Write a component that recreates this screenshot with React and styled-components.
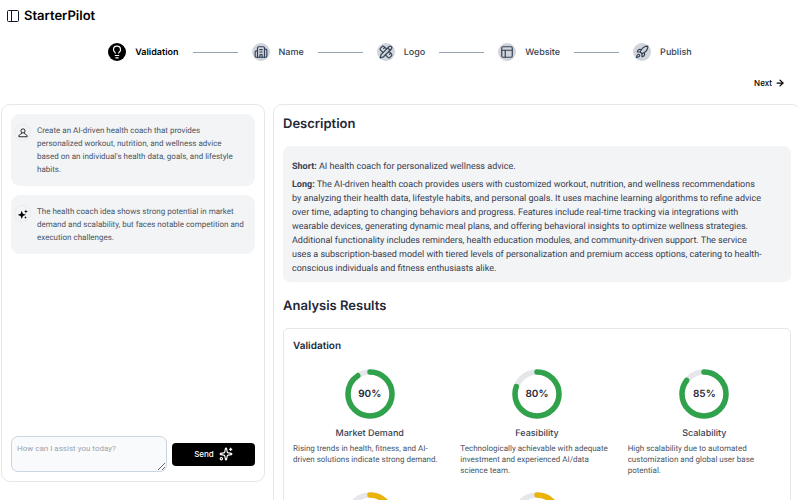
import React from 'react'
import styled, { createGlobalStyle } from 'styled-components'
import { ArrowRight, Building2, Lightbulb, PanelsTopLeft, PencilRuler, Rocket, Sparkles } from 'lucide-react'

const steps = [
    { label: 'Validation', icon: Lightbulb, active: true },
    { label: 'Name', icon: Building2 },
    { label: 'Logo', icon: PencilRuler },
    { label: 'Website', icon: PanelsTopLeft },
    { label: 'Publish', icon: Rocket },
]

const scores = [
    { title: 'Market Demand', value: 90, text: 'Rising trends in health, fitness, and AI-driven solutions indicate strong demand.' },
    { title: 'Feasibility', value: 80, text: 'Technologically achievable with adequate investment and experienced AI/data science team.' },
    { title: 'Scalability', value: 85, text: 'High scalability due to automated customization and global user base potential.' },
]

// second row of the grid, only the rings so far
const pending = [70, 75]

const UserIcon = () => (
    <svg width="10" height="10" viewBox="0 0 24 24" fill="none" stroke="currentColor" strokeWidth="2">
        <circle cx="12" cy="7" r="5" />
        <path d="M9 11.5c0 2-1 3-3 3.500C3.500 15.700 2 17 2 21h20c0-4-1.500-5.300-4-6-2-.5-3-1.500-3-3.500" />
    </svg>
)

const StarsIcon = () => (
    <svg width="10" height="10" viewBox="0 0 24 24" fill="currentColor">
        <path d="M9 4l2.800 7.200L19 14l-7.200 2.800L9 24l-2.800-7.200L-1 14l7.200-2.800z" />
        <path d="M19 1l1.300 3.700L24 6l-3.700 1.300L19 11l-1.300-3.700L14 6l3.700-1.300z" />
        <path d="M18 17l1 2.500 2.500 1-2.500 1-1 2.500-1-2.500-2.500-1 2.500-1z" />
    </svg>
)

const Ring = ({ value, children }) => {
    const length = 2 * Math.PI * 22
    return (
        <RingWrap>
            <svg width="50" height="50" viewBox="0 0 50 50" fill="none" strokeWidth="5.5">
                <circle cx="25" cy="25" r="22" stroke="#e5e7eb" />
                <circle
                    cx="25"
                    cy="25"
                    r="22"
                    stroke={value >= 80 ? '#31a24c' : '#eab308'}
                    strokeLinecap="round"
                    strokeDasharray={length}
                    strokeDashoffset={length * (1 - value / 100)}
                    transform="rotate(-90 25 25)"
                />
            </svg>
            {children}
        </RingWrap>
    )
}

const App = () => (
    <Page>
        <GlobalStyle />
        <Header>
            <MenuButton type="button" aria-label="Toggle sidebar">
                <svg width="12" height="12" viewBox="0 0 12 12" fill="none" stroke="currentColor">
                    <rect x="0.5" y="0.5" width="11" height="11" rx="1" />
                    <path d="M4.500 0.500v11" />
                </svg>
            </MenuButton>
            <Brand>StarterPilot</Brand>
        </Header>

        <Steps>
            {steps.map(({ label, icon: Icon, active }, i) => (
                <React.Fragment key={label}>
                    {i > 0 && <StepLine />}
                    <Step>
                        <StepIcon $active={active}><Icon size={14} strokeWidth={2} /></StepIcon>
                        <StepLabel $active={active}>{label}</StepLabel>
                    </Step>
                </React.Fragment>
            ))}
        </Steps>

        <Toolbar>
            <NextButton type="button">Next <ArrowRight size={10} strokeWidth={3} /></NextButton>
        </Toolbar>

        <Columns>
            <Chat>
                <Messages>
                    <Message>
                        <Avatar><UserIcon /></Avatar>
                        <MessageText>Create an AI-driven health coach that provides personalized workout, nutrition, and wellness advice based&nbsp;on an individual's health data, goals, and lifestyle habits.</MessageText>
                    </Message>
                    <Message>
                        <Avatar><StarsIcon /></Avatar>
                        <MessageText>The health coach idea shows strong potential in market demand and scalability, but faces notable competition and execution challenges.</MessageText>
                    </Message>
                </Messages>
                <ChatForm onSubmit={(e) => e.preventDefault()}>
                    <ChatInput aria-label="Message" placeholder="How can I assist you today?" />
                    <SendButton type="submit">Send <Sparkles size={14} strokeWidth={2} /></SendButton>
                </ChatForm>
            </Chat>

            <Panel>
                <Title>Description</Title>
                <Summary>
                    <p><strong>Short:</strong> AI health coach for personalized wellness advice.</p>
                    <p><strong>Long:</strong> The AI-driven health coach provides users with customized workout, nutrition, and wellness recommendations by analyzing their health data, lifestyle habits, and personal goals. It uses machine learning algorithms to refine advice over time, adapting to changing behaviors and progress. Features include real-time tracking via integrations with wearable devices, generating dynamic meal plans, and offering behavioral insights to optimize wellness strategies. Additional functionality includes reminders, health education modules, and community-driven support. The service uses a subscription-based model with tiered levels of personalization and premium access options, catering to health-conscious individuals and fitness enthusiasts alike.</p>
                </Summary>
                <Title>Analysis Results</Title>
                <Card>
                    <CardTitle>Validation</CardTitle>
                    <Scores>
                        {scores.map((score) => (
                            <Score key={score.title}>
                                <Ring value={score.value}>
                                    <RingValue>{score.value}%</RingValue>
                                </Ring>
                                <ScoreTitle>{score.title}</ScoreTitle>
                                <ScoreText>{score.text}</ScoreText>
                            </Score>
                        ))}
                        {pending.map((value) => (
                            <Score key={value}>
                                <Ring value={value} />
                            </Score>
                        ))}
                    </Scores>
                </Card>
            </Panel>
        </Columns>
    </Page>
)

export default App

const GlobalStyle = createGlobalStyle`
    * {
        box-sizing: border-box;
    }
    body {
        margin: 0;
        background: white;
        color: #1f2937;
        font-family: Inter, sans-serif;
        text-rendering: geometricPrecision;
    }
    h1, h2, h3, h4, p, ol {
        margin: 0;
        padding: 0;
    }
    button, textarea {
        font-family: inherit;
    }
    svg {
        display: block;
        flex-shrink: 0;
    }
`
const Page = styled.div`
    height: 100vh;
    overflow: hidden;
`
const Header = styled.header`
    display: flex;
    align-items: center;
    gap: 5px;
    height: 32px;
    padding: 0 7px;
`
const MenuButton = styled.button`
    padding: 0;
    border: none;
    background: none;
    color: #0f172a;
`
const Brand = styled.h1`
    font-size: 13px;
    font-weight: 600;
    line-height: 20px;
    color: black;
`
const Steps = styled.ol`
    display: flex;
    align-items: center;
    justify-content: center;
    gap: 14px;
    height: 40px;
    padding-left: 2px;
    list-style: none;
`
const Step = styled.li`
    display: flex;
    align-items: center;
    gap: 9px;
`
const StepIcon = styled.span`
    display: flex;
    align-items: center;
    justify-content: center;
    width: 18px;
    height: 18px;
    border-radius: 50%;
    background: ${props => props.$active ? 'black' : '#d1d5db'};
    color: ${props => props.$active ? 'white' : '#334155'};
`
const StepLabel = styled.span`
    font-size: 9px;
    font-weight: ${props => props.$active ? 600 : 500};
    color: ${props => props.$active ? 'black' : '#334155'};
`
const StepLine = styled.li`
    width: 45px;
    height: 1px;
    background: #94a3b8;
`
const Toolbar = styled.div`
    display: flex;
    justify-content: flex-end;
    align-items: center;
    height: 22px;
    padding: 0 13px;
`
const NextButton = styled.button`
    display: flex;
    align-items: center;
    gap: 3px;
    padding: 0;
    border: none;
    background: none;
    color: black;
    font-size: 8px;
    font-weight: 500;
`
const Columns = styled.main`
    display: grid;
    grid-template-columns: minmax(0, 1fr) minmax(0, 2fr);
    align-items: start;
    gap: 8px;
    margin: 10px -3px 0 1px;
`
const Panel = styled.section`
    border: 1px solid #e5e7eb;
    border-radius: 9px;
    padding: 9px;
`
const Chat = styled(Panel)`
    display: flex;
    flex-direction: column;
    height: calc(100vh - 122px);
`
const Messages = styled.div`
    flex: 1;
    display: flex;
    flex-direction: column;
    gap: 9px;
`
const Message = styled.div`
    display: flex;
    align-items: flex-start;
    gap: 6px;
    padding: 10px 9px 10px 3px;
    border-radius: 9px;
    background: #f3f4f6;
`
const Avatar = styled.span`
    display: flex;
    align-items: center;
    justify-content: center;
    flex-shrink: 0;
    width: 17px;
    height: 17px;
    border: 1px solid #e9ebee;
    border-radius: 50%;
    color: black;
`
const MessageText = styled.p`
    font-family: Roboto, sans-serif;
    font-size: 8px;
    line-height: 13px;
    color: #4b5563;
`
const ChatForm = styled.form`
    display: flex;
    align-items: center;
    gap: 5px;
`
const ChatInput = styled.textarea`
    flex: 1;
    min-width: 0;
    height: 36px;
    padding: 5px;
    border: 1px solid #cbd5e1;
    border-radius: 7px;
    background: #f9fafb;
    font-family: Roboto, sans-serif;
    font-size: 8px;
    line-height: 13px;
    color: #1f2937;

    &::placeholder {
        color: #9ca3af;
    }
`
const SendButton = styled.button`
    display: flex;
    align-items: center;
    justify-content: center;
    gap: 5px;
    width: 83px;
    height: 23px;
    border: none;
    border-radius: 4px;
    background: black;
    color: white;
    font-size: 8px;
    font-weight: 500;
`
const Title = styled.h2`
    font-size: 13px;
    font-weight: 600;
    line-height: 20px;
    color: #1f2937;
`
const Summary = styled.div`
    margin: 12px 0 14px;
    padding: 14px 25px 6px 9px;
    border-radius: 7px;
    background: #f3f4f6;
    font-family: Roboto, sans-serif;
    font-size: 9px;
    line-height: 14px;
    color: #374151;

    p + p {
        margin-top: 4px;
    }
`
const Card = styled.div`
    margin-top: 12px;
    padding: 10px 9px;
    border: 1px solid #e5e7eb;
    border-radius: 5px;
`
const CardTitle = styled.h3`
    font-size: 10px;
    font-weight: 600;
    line-height: 14px;
`
const Scores = styled.div`
    display: grid;
    grid-template-columns: repeat(3, 1fr);
    gap: 16px 14px;
    margin-top: 16px;
`
const Score = styled.div`
    display: flex;
    flex-direction: column;
    align-items: center;
`
const RingWrap = styled.div`
    display: grid;
    place-items: center;

    & > * {
        grid-area: 1 / 1;
    }
`
const RingValue = styled.span`
    font-size: 10px;
    font-weight: 600;
`
const ScoreTitle = styled.h4`
    margin-top: 8px;
    font-size: 9px;
    font-weight: 500;
    line-height: 14px;
    color: #374151;
`
const ScoreText = styled.p`
    width: 100%;
    margin-top: 2px;
    font-family: Roboto, sans-serif;
    font-size: 8px;
    line-height: 11px;
    color: #4b5563;
`
